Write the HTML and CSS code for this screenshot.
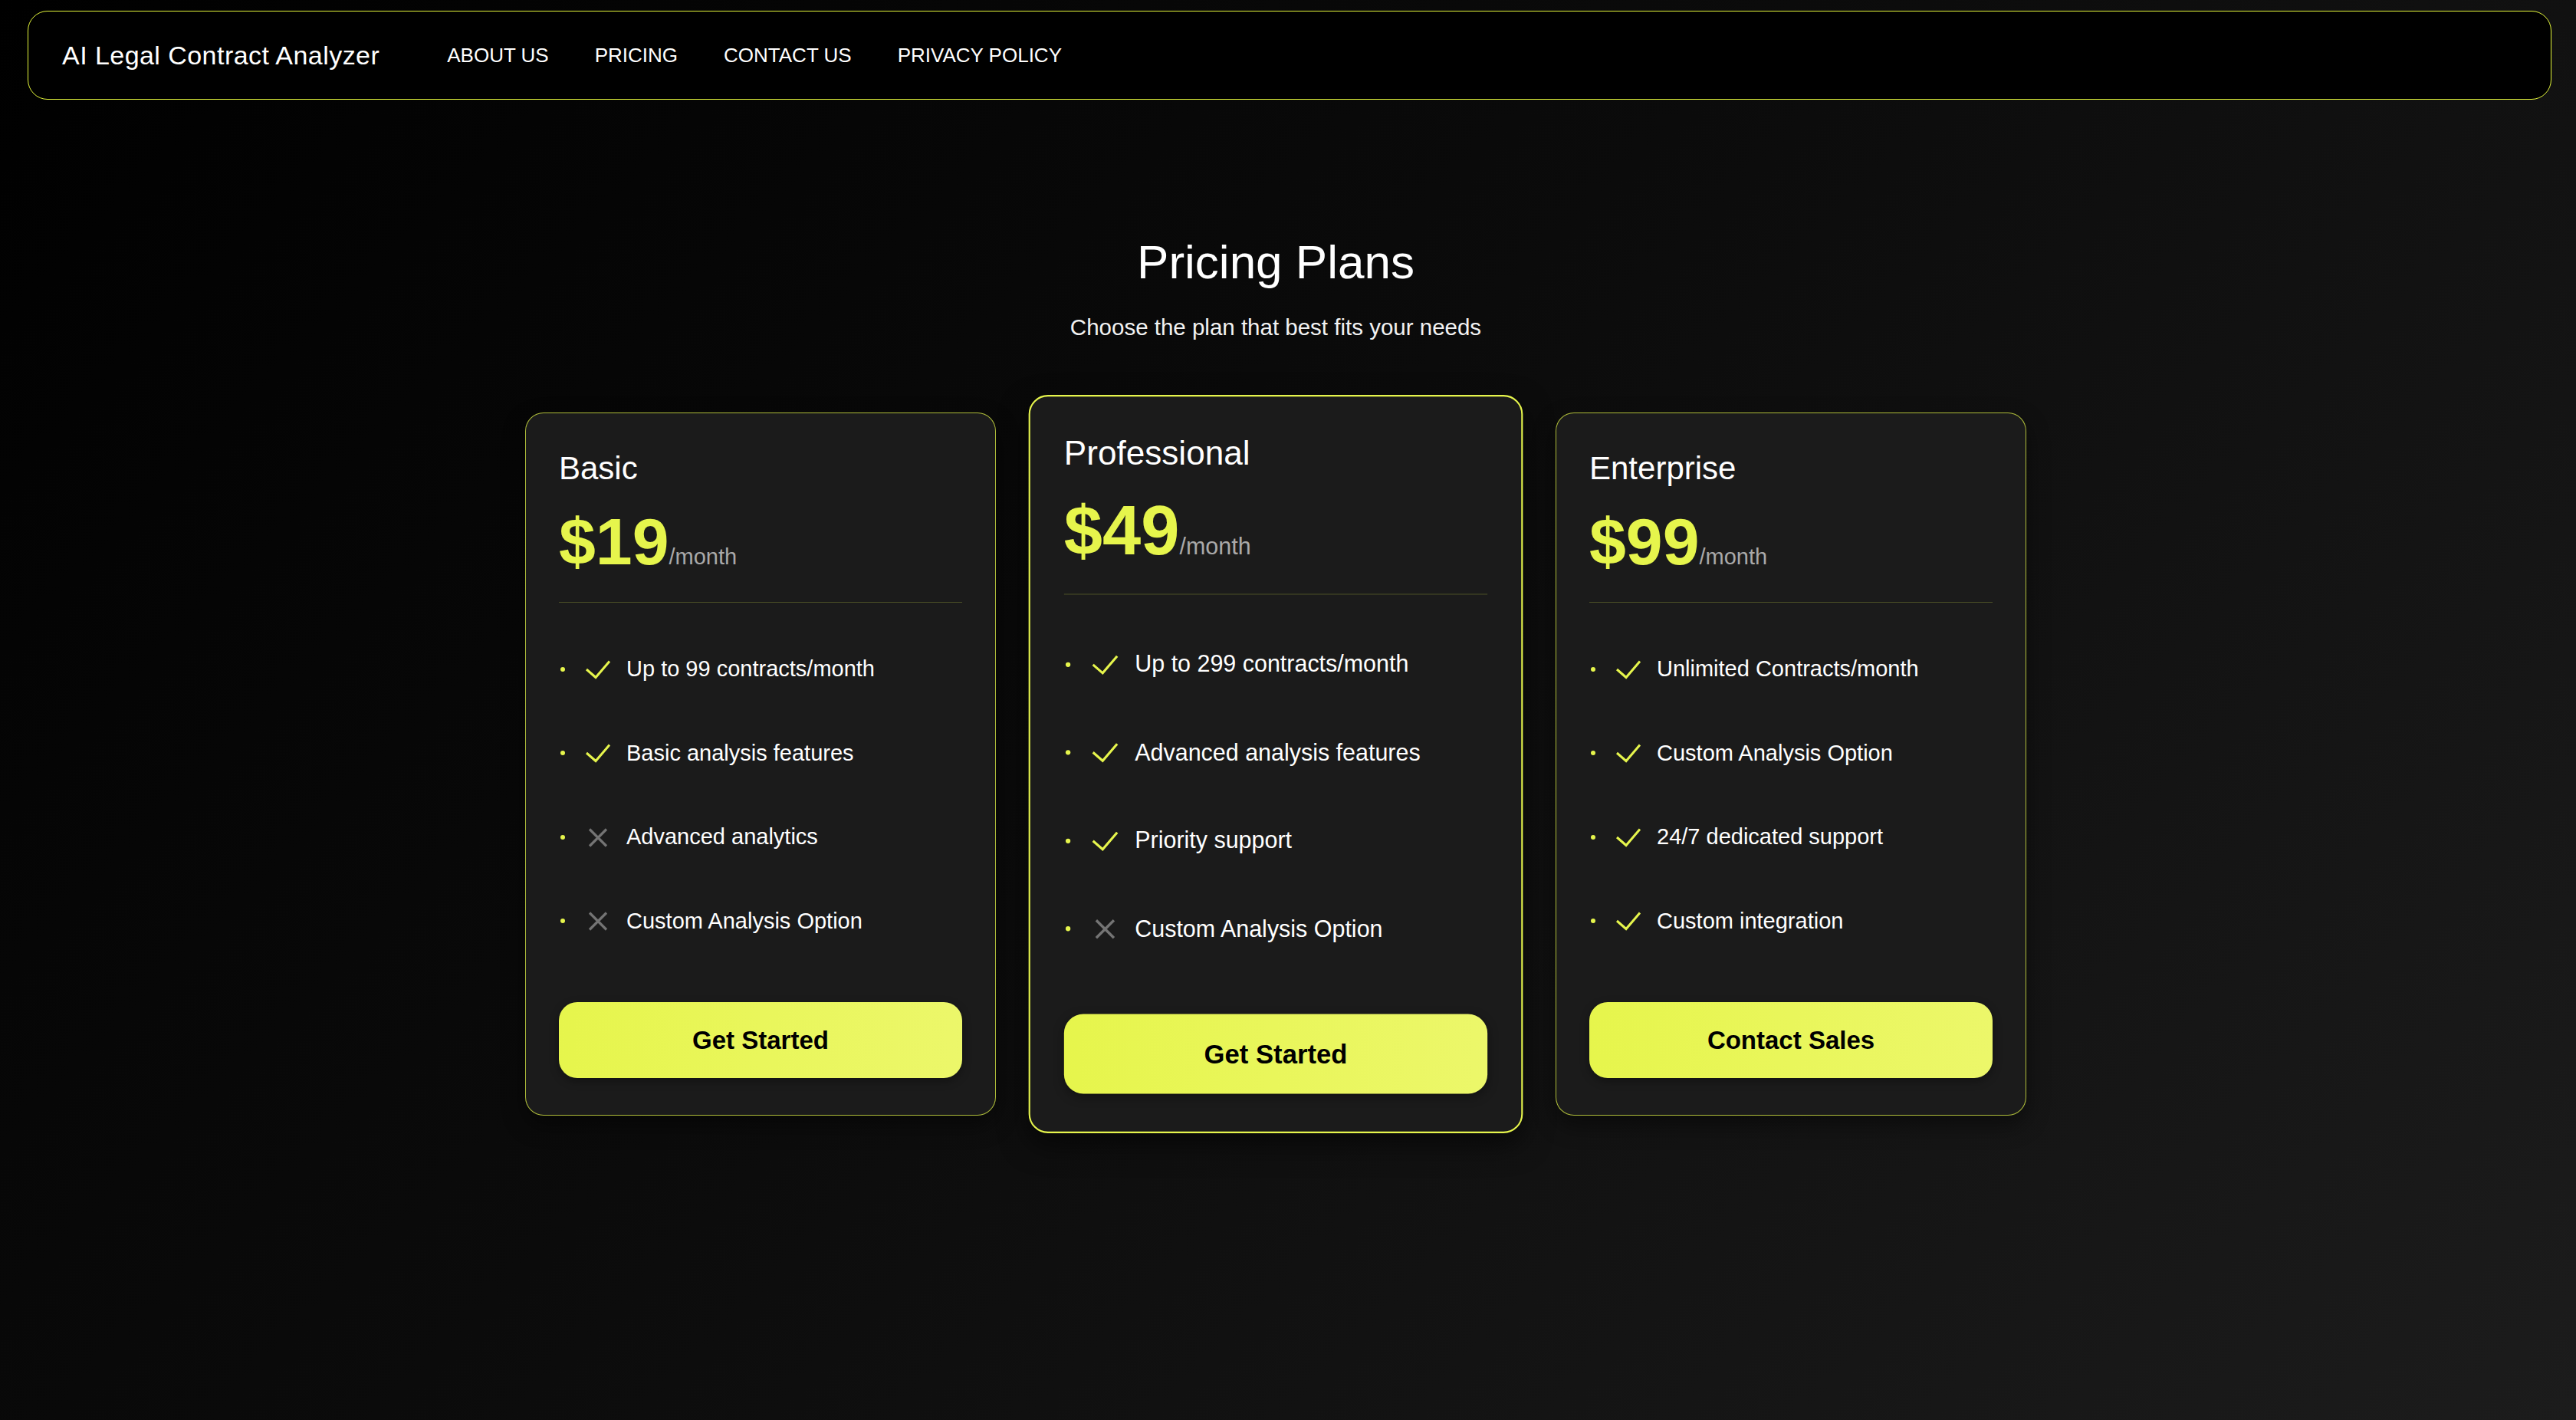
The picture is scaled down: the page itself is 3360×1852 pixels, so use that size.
FILE: index.html
```html
<!DOCTYPE html>
<html lang="en">
<head>
<meta charset="utf-8">
<title>AI Legal Contract Analyzer - Pricing</title>
<link rel="stylesheet" href="styles.css">
</head>
<body>
<nav class="navbar">
  <div class="brand">AI Legal Contract Analyzer</div>
  <ul class="nav-links">
    <li><a href="#">ABOUT US</a></li>
    <li><a href="#">PRICING</a></li>
    <li><a href="#">CONTACT US</a></li>
    <li><a href="#">PRIVACY POLICY</a></li>
  </ul>
</nav>

<main class="pricing">
  <h1 class="pricing-title">Pricing Plans</h1>
  <p class="pricing-subtitle">Choose the plan that best fits your needs</p>

  <div class="plans">
    <div class="plan">
      <div class="plan-head">
        <h2 class="plan-name">Basic</h2>
        <div class="plan-price"><span class="amount">$19</span><span class="period">/month</span></div>
      </div>
      <ul class="features">
        <li><span class="dot"></span><svg class="icon" viewBox="0 0 34 26"><path class="ok" d="M2 13 L14 23.5 L32 2.5"/></svg><span class="feat">Up to 99 contracts/month</span></li>
        <li><span class="dot"></span><svg class="icon" viewBox="0 0 34 26"><path class="ok" d="M2 13 L14 23.5 L32 2.5"/></svg><span class="feat">Basic analysis features</span></li>
        <li><span class="dot"></span><svg class="icon" viewBox="0 0 34 26"><path class="no" d="M6 2.5 L28 24.5 M28 2.5 L6 24.5"/></svg><span class="feat">Advanced analytics</span></li>
        <li><span class="dot"></span><svg class="icon" viewBox="0 0 34 26"><path class="no" d="M6 2.5 L28 24.5 M28 2.5 L6 24.5"/></svg><span class="feat">Custom Analysis Option</span></li>
      </ul>
      <button class="plan-btn">Get Started</button>
    </div>

    <div class="plan plan-featured">
      <div class="plan-head">
        <h2 class="plan-name">Professional</h2>
        <div class="plan-price"><span class="amount">$49</span><span class="period">/month</span></div>
      </div>
      <ul class="features">
        <li><span class="dot"></span><svg class="icon" viewBox="0 0 34 26"><path class="ok" d="M2 13 L14 23.5 L32 2.5"/></svg><span class="feat">Up to 299 contracts/month</span></li>
        <li><span class="dot"></span><svg class="icon" viewBox="0 0 34 26"><path class="ok" d="M2 13 L14 23.5 L32 2.5"/></svg><span class="feat">Advanced analysis features</span></li>
        <li><span class="dot"></span><svg class="icon" viewBox="0 0 34 26"><path class="ok" d="M2 13 L14 23.5 L32 2.5"/></svg><span class="feat">Priority support</span></li>
        <li><span class="dot"></span><svg class="icon" viewBox="0 0 34 26"><path class="no" d="M6 2.5 L28 24.5 M28 2.5 L6 24.5"/></svg><span class="feat">Custom Analysis Option</span></li>
      </ul>
      <button class="plan-btn">Get Started</button>
    </div>

    <div class="plan">
      <div class="plan-head">
        <h2 class="plan-name">Enterprise</h2>
        <div class="plan-price"><span class="amount">$99</span><span class="period">/month</span></div>
      </div>
      <ul class="features">
        <li><span class="dot"></span><svg class="icon" viewBox="0 0 34 26"><path class="ok" d="M2 13 L14 23.5 L32 2.5"/></svg><span class="feat">Unlimited Contracts/month</span></li>
        <li><span class="dot"></span><svg class="icon" viewBox="0 0 34 26"><path class="ok" d="M2 13 L14 23.5 L32 2.5"/></svg><span class="feat">Custom Analysis Option</span></li>
        <li><span class="dot"></span><svg class="icon" viewBox="0 0 34 26"><path class="ok" d="M2 13 L14 23.5 L32 2.5"/></svg><span class="feat">24/7 dedicated support</span></li>
        <li><span class="dot"></span><svg class="icon" viewBox="0 0 34 26"><path class="ok" d="M2 13 L14 23.5 L32 2.5"/></svg><span class="feat">Custom integration</span></li>
      </ul>
      <button class="plan-btn">Contact Sales</button>
    </div>
  </div>
</main>
</body>
</html>
```

FILE: styles.css
```css
* {
  box-sizing: border-box;
}

html, body {
  margin: 0;
  padding: 0;
}

body {
  min-height: 100vh;
  background: linear-gradient(135deg, #000000 0%, #0b0b0b 45%, #1c1c1c 100%);
  color: #ffffff;
  font-family: "Helvetica Neue", Helvetica, "Liberation Sans", Arial, sans-serif;
}

/* ---------- Navbar ---------- */
.navbar {
  display: flex;
  align-items: center;
  height: 116px;
  margin: 14px 32px 0 36px;
  padding: 0 44px;
  background: #000000;
  border: 1.5px solid #e3f53a;
  border-radius: 26px;
}

.brand {
  font-size: 34px;
  letter-spacing: 0.45px;
  color: #ffffff;
  white-space: nowrap;
}

.nav-links {
  display: flex;
  gap: 60px;
  list-style: none;
  margin: 0 0 0 88px;
  padding: 0;
}

.nav-links a {
  color: #ffffff;
  text-decoration: none;
  font-size: 26px;
  white-space: nowrap;
}

/* ---------- Pricing ---------- */
.pricing {
  padding: 175px 32px 0 0;
  text-align: center;
}

.pricing-title {
  margin: 0;
  font-size: 62px;
  line-height: 74px;
  font-weight: 400;
}

.pricing-subtitle {
  margin: 26px 0 0;
  font-size: 29.5px;
  line-height: 43.5px;
  color: #f2f2f2;
}

.plans {
  display: grid;
  grid-template-columns: repeat(3, 614px);
  gap: 58px;
  justify-content: center;
  align-items: start;
  margin-top: 89.5px;
  text-align: left;
}

.plan {
  display: flex;
  flex-direction: column;
  width: 614px;
  height: 917px;
  padding: 47px 43px 46px;
  background: #1b1b1b;
  border: 1px solid rgba(226, 244, 70, 0.75);
  border-radius: 24px;
  box-shadow: 0 12px 30px rgba(0, 0, 0, 0.45);
}

.plan-featured {
  border: 2px solid #e6f54c;
  padding: 46px 42px 45px;
  transform: scale(1.05);
  box-shadow: 0 14px 34px rgba(0, 0, 0, 0.55);
}

.plan-head {
  padding-bottom: 36px;
  border-bottom: 1px solid rgba(226, 244, 70, 0.25);
}

.plan-name {
  margin: 0 0 27px;
  font-size: 42px;
  line-height: 50px;
  font-weight: 400;
  color: #ffffff;
}

.plan-price {
  line-height: 86px;
  height: 86px;
}

.amount {
  font-size: 86px;
  font-weight: 700;
  color: #e6f54c;
}

.period {
  font-size: 29px;
  color: #a9a9a9;
  line-height: 1;
}

.features {
  list-style: none;
  margin: 32px 0 0;
  padding: 0;
}

.features li {
  display: flex;
  align-items: center;
  padding: 33px 0;
  line-height: 43.5px;
  font-size: 29px;
  color: #ffffff;
}

.dot {
  flex: none;
  width: 6px;
  height: 6px;
  margin: 0 26px 0 2px;
  border-radius: 50%;
  background: #e6f54c;
}

.icon {
  flex: none;
  width: 34px;
  height: 26px;
  margin-right: 20px;
  fill: none;
  stroke-width: 3;
}

.icon .ok {
  stroke: #e6f54c;
  stroke-linecap: butt;
  stroke-linejoin: miter;
}

.icon .no {
  stroke: #747474;
  stroke-width: 3.2;
}

.feat {
  white-space: nowrap;
}

.plan-btn {
  margin-top: 51px;
  width: 100%;
  height: 99px;
  border: none;
  border-radius: 24px;
  background: linear-gradient(90deg, #e6f54c 0%, #ecf76a 100%);
  color: #000000;
  font-family: inherit;
  font-size: 33px;
  font-weight: 700;
  cursor: pointer;
  box-shadow: 0 4px 12px rgba(0, 0, 0, 0.35);
}
```
